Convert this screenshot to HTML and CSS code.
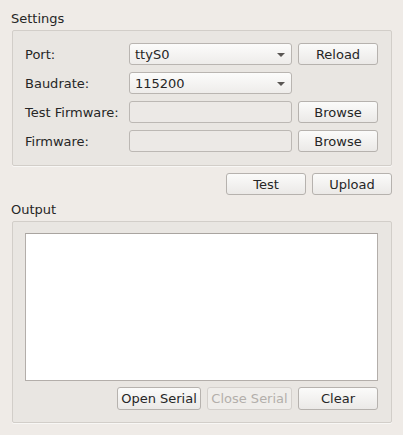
FILE: index.html
```html
<!DOCTYPE html>
<html>
<head>
<meta charset="utf-8">
<link rel="stylesheet" href="styles.css">
</head>
<body>
<div class="window">
  <div class="group-title">Settings</div>
  <div class="group settings">
    <div class="label">Port:</div>
    <div class="combo"><span>ttyS0</span><i class="arrow"></i></div>
    <button class="btn">Reload</button>

    <div class="label">Baudrate:</div>
    <div class="combo"><span>115200</span><i class="arrow"></i></div>
    <div></div>

    <div class="label">Test Firmware:</div>
    <div class="edit"></div>
    <button class="btn">Browse</button>

    <div class="label">Firmware:</div>
    <div class="edit"></div>
    <button class="btn">Browse</button>
  </div>

  <div class="actions">
    <button class="btn">Test</button>
    <button class="btn">Upload</button>
  </div>

  <div class="group-title output-title">Output</div>
  <div class="group output">
    <div class="textarea"></div>
    <div class="output-buttons">
      <button class="btn w84">Open Serial</button>
      <button class="btn w85" disabled>Close Serial</button>
      <button class="btn">Clear</button>
    </div>
  </div>
</div>
</body>
</html>
```

FILE: styles.css
```css
html, body {
  margin: 0;
  padding: 0;
  background: #efebe7;
}
body {
  width: 403px;
  height: 435px;
  font-family: "DejaVu Sans", sans-serif;
  font-size: 13px;
  color: #262626;
  overflow: hidden;
}
.window {
  padding: 11px 11px 0 12px;
  width: 380px;
}
.group-title {
  line-height: 15px;
  height: 15px;
  margin-left: -1px;
  margin-bottom: 4px;
}
.output-title {
  margin-top: 7px;
}
.group {
  border: 1px solid #d2cec9;
  border-radius: 2px;
  background: #e9e6e2;
  box-shadow: 0 1px 0 #f8f7f5;
}
.settings {
  display: grid;
  grid-template-columns: 98px 163px 80px;
  grid-auto-rows: 22px;
  column-gap: 6px;
  row-gap: 7px;
  padding: 12px 13px 13px 12px;
}
.label {
  display: flex;
  align-items: center;
}
.combo {
  display: flex;
  align-items: center;
  justify-content: space-between;
  box-sizing: border-box;
  border: 1px solid #b9b5b1;
  border-radius: 3px;
  background: linear-gradient(#fcfcfb, #eeecea);
  padding: 0 6px 0 5px;
}
.arrow {
  display: block;
  width: 0;
  height: 0;
  border-left: 4px solid transparent;
  border-right: 4px solid transparent;
  border-top: 4px solid #5a5754;
  margin-top: 1px;
}
.edit {
  box-sizing: border-box;
  border: 1px solid #bcb8b4;
  border-radius: 3px;
  background: #ece9e6;
}
.btn {
  box-sizing: border-box;
  height: 22px;
  width: 80px;
  margin: 0;
  padding: 0;
  font-family: "DejaVu Sans", sans-serif;
  font-size: 13px;
  color: #262626;
  border: 1px solid #b6b2ae;
  border-radius: 3px;
  background: linear-gradient(#fbfbfa, #ebe9e7);
}
.btn:disabled {
  color: #b3afab;
  border-color: #d4d0cc;
  background: #efedea;
}
.actions {
  display: flex;
  justify-content: flex-end;
  gap: 6px;
  margin-top: 7px;
}
.output {
  padding: 11px 13px 12px 12px;
  height: 177px;
}
.textarea {
  height: 148px;
  box-sizing: border-box;
  border: 1px solid #b3aeaa;
  border-top-color: #a9a4a0;
  background: #ffffff;
}
.output-buttons {
  display: flex;
  justify-content: flex-end;
  gap: 6px;
  margin-top: 6px;
}
.output-buttons .btn {
  height: 23px;
}
.w84 { width: 84px; }
.w85 { width: 85px; }
```
